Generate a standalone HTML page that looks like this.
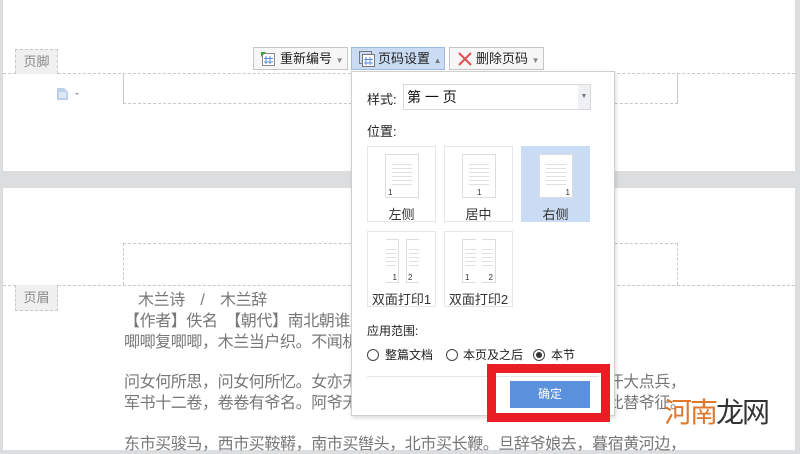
<!DOCTYPE html>
<html><head><meta charset="utf-8"><style>
*{margin:0;padding:0;box-sizing:border-box}
body{width:800px;height:450px;overflow:hidden;background:#dcdddf;font-family:"Liberation Sans","Noto Sans CJK SC",sans-serif;position:relative}
.a{position:absolute}
.pg{background:#fff}
.btn{position:absolute;height:23px;border:1px solid #c6c6c6;background:#f6f6f6;font-size:13px;line-height:21px;color:#222;padding-left:26px}
.tile{position:absolute;width:69px;height:76px;border:1px solid #e6e6e6;background:#fff;font-size:13px;color:#333;text-align:center}
.doc{position:absolute;width:34px;height:44px;border:1px solid #ddd;background:#fff;left:17px;top:7px}
.ln{position:absolute;left:6px;right:6px;height:1px;background:#e0e0e0}
.txt{position:absolute;left:124px;font-size:16px;color:#777;white-space:nowrap;letter-spacing:-0.4px}
.rd{position:absolute;width:12px;height:12px;border:1px solid #444;border-radius:50%;top:277px}
.rl{position:absolute;top:274px;font-size:12px;color:#222;white-space:nowrap}
</style></head><body>
<div class="a pg" style="left:3px;top:0;width:792px;height:171px"></div>
<div class="a pg" style="left:3px;top:188px;width:792px;height:262px"></div>
<div class="a" style="left:3px;top:73px;width:792px;border-top:1px dashed #c8c8c8"></div>
<div class="a" style="left:15px;top:49px;width:43px;height:25px;border:1px dashed #c8c8c8;border-bottom:none;background:#f0f0f0;font-size:13px;color:#888;text-align:center;line-height:24px">页脚</div>
<div class="a" style="left:123px;top:73px;width:555px;height:31px;border-left:1px solid #c8c8c8;border-right:1px solid #c8c8c8;border-bottom:1px dashed #c8c8c8"></div>
<svg class="a" style="left:56px;top:87px" width="28" height="14"><path d="M1 1h7l4 4v8H1z" fill="#bcd0ec"/><path d="M3 6h7M3 8h7M3 10h7" stroke="#fff"/><path d="M19 6l2 2 2-2z" fill="#999"/></svg>
<div class="a" style="left:123px;top:243px;width:555px;height:42px;border:1px dashed #c8c8c8;border-bottom:none"></div>
<div class="a" style="left:3px;top:285px;width:792px;border-top:1px dashed #c8c8c8"></div>
<div class="a" style="left:15px;top:285px;width:43px;height:26px;border:1px dashed #c8c8c8;border-top:none;background:#f0f0f0;font-size:13px;color:#888;text-align:center;line-height:25px">页眉</div>
<div class="txt" style="left:138px;top:286px">木兰诗　/　木兰辞</div>
<div class="txt" style="top:307px">【作者】佚名　【朝代】南北朝谁来写这个</div>
<div class="txt" style="top:328px">唧唧复唧唧，木兰当户织。不闻机杼声，惟闻女叹息。</div>
<div class="txt" style="top:368px">问女何所思，问女何所忆。女亦无所思，女亦无所忆。昨夜见军帖，可汗大点兵，</div>
<div class="txt" style="top:389px">军书十二卷，卷卷有爷名。阿爷无大儿，木兰无长兄，愿为市鞍马，从此替爷征。</div>
<div class="txt" style="top:430px">东市买骏马，西市买鞍鞯，南市买辔头，北市买长鞭。旦辞爷娘去，暮宿黄河边，</div>
<div class="btn" style="left:253px;top:47px;width:95px">重新编号 <span style="font-size:8px;color:#888">▼</span>
<svg class="a" style="left:6px;top:3px" width="16" height="16"><rect x="2.5" y="2.5" width="12" height="12" fill="#fff" stroke="#888"/><path d="M6 5v8M10 5v8M4 7.5h9M4 11h9" stroke="#5a8ad8"/><path d="M1 1h5L1 6z" fill="#3aa43a"/></svg></div>
<div class="btn" style="left:351px;top:47px;width:94px;background:#cadcf3;border-color:#9bbbe6">页码设置 <span style="font-size:8px;color:#777">▲</span>
<svg class="a" style="left:7px;top:3px" width="16" height="16"><rect x="0.5" y="0.5" width="12" height="12" fill="none" stroke="#777"/><rect x="3.5" y="3.5" width="12" height="12" fill="#fff" stroke="#777"/><path d="M7 6v8M11 6v8M5 8.5h9M5 12h9" stroke="#5a8ad8"/></svg></div>
<div class="btn" style="left:449px;top:47px;width:95px">删除页码 <span style="font-size:8px;color:#888">▼</span>
<svg class="a" style="left:8px;top:4px" width="14" height="14"><path d="M1 1l12 12M13 1L1 13" stroke="#e05050" stroke-width="2"/></svg></div>
<div class="a" style="left:351px;top:71px;width:264px;height:345px;background:#fff;border:1px solid #cfcfcf;box-shadow:1px 2px 4px rgba(0,0,0,.15)">
 <div class="a" style="left:15px;top:17px;font-size:13px;color:#222">样式:</div>
 <div class="a" style="left:51px;top:12px;width:188px;height:26px;border:1px solid #d8d8d8;font-size:14px;line-height:24px;padding-left:3px;color:#111">第 一 页
  <div class="a" style="right:0;top:0;width:12px;height:24px;background:#eef0f3;font-size:7px;color:#778;text-align:center;line-height:24px">▼</div></div>
 <div class="a" style="left:15px;top:49px;font-size:13px;color:#222">位置:</div>
 <div class="tile" style="left:15px;top:74px"><div class="doc"><div class="ln" style="top:9px"></div><div class="ln" style="top:13px"></div><div class="ln" style="top:17px"></div><div class="ln" style="top:21px"></div><div class="ln" style="top:25px"></div><div class="ln" style="top:29px"></div><span class="a" style="left:2px;bottom:0;font-size:8px">1</span></div><div class="a" style="left:0;right:0;top:57px">左侧</div></div>
 <div class="tile" style="left:92px;top:74px"><div class="doc"><div class="ln" style="top:9px"></div><div class="ln" style="top:13px"></div><div class="ln" style="top:17px"></div><div class="ln" style="top:21px"></div><div class="ln" style="top:25px"></div><div class="ln" style="top:29px"></div><span class="a" style="left:14px;bottom:0;font-size:8px">1</span></div><div class="a" style="left:0;right:0;top:57px">居中</div></div>
 <div class="tile" style="left:169px;top:74px;background:#cadcf3;border-color:#cadcf3"><div class="doc"><div class="ln" style="top:9px"></div><div class="ln" style="top:13px"></div><div class="ln" style="top:17px"></div><div class="ln" style="top:21px"></div><div class="ln" style="top:25px"></div><div class="ln" style="top:29px"></div><span class="a" style="right:2px;bottom:0;font-size:8px">1</span></div><div class="a" style="left:0;right:0;top:57px">右侧</div></div>
 <div class="tile" style="left:15px;top:159px"><div class="doc" style="left:18px;width:13px;border-left:none"><div class="ln" style="top:9px;left:0;right:2px"></div><div class="ln" style="top:13px;left:0;right:2px"></div><div class="ln" style="top:17px;left:0;right:2px"></div><div class="ln" style="top:21px;left:0;right:2px"></div><div class="ln" style="top:25px;left:0;right:2px"></div><span class="a" style="right:1px;bottom:0;font-size:8px">1</span></div><div class="doc" style="left:38px;width:13px;border-right:none"><div class="ln" style="top:9px;left:2px;right:0"></div><div class="ln" style="top:13px;left:2px;right:0"></div><div class="ln" style="top:17px;left:2px;right:0"></div><div class="ln" style="top:21px;left:2px;right:0"></div><div class="ln" style="top:25px;left:2px;right:0"></div><span class="a" style="left:1px;bottom:0;font-size:8px">2</span></div><div class="a" style="left:0;right:0;top:57px">双面打印1</div></div>
 <div class="tile" style="left:92px;top:159px"><div class="doc" style="left:17px;width:14px;border-right:none"><div class="ln" style="top:9px;left:2px;right:0"></div><div class="ln" style="top:13px;left:2px;right:0"></div><div class="ln" style="top:17px;left:2px;right:0"></div><div class="ln" style="top:21px;left:2px;right:0"></div><div class="ln" style="top:25px;left:2px;right:0"></div><span class="a" style="left:2px;bottom:0;font-size:8px">1</span></div><div class="doc" style="left:37px;width:14px;border-left:none"><div class="ln" style="top:9px;left:0;right:2px"></div><div class="ln" style="top:13px;left:0;right:2px"></div><div class="ln" style="top:17px;left:0;right:2px"></div><div class="ln" style="top:21px;left:0;right:2px"></div><div class="ln" style="top:25px;left:0;right:2px"></div><span class="a" style="right:2px;bottom:0;font-size:8px">2</span></div><div class="a" style="left:0;right:0;top:57px">双面打印2</div></div>
 <div class="a" style="left:15px;top:250px;font-size:12px;color:#222">应用范围:</div>
 <div class="rd" style="left:15px"></div><div class="rl" style="left:33px">整篇文档</div>
 <div class="rd" style="left:94px"></div><div class="rl" style="left:111px">本页及之后</div>
 <div class="rd" style="left:181px"><span style="position:absolute;left:2px;top:2px;width:6px;height:6px;border-radius:50%;background:#333"></span></div><div class="rl" style="left:199px">本节</div>
 <div class="a" style="left:15px;top:304px;width:232px;border-top:1px solid #e6e6e6"></div>
</div>
<div class="a" style="left:487px;top:364px;width:123px;height:58px;border:9px solid #ea1c24"></div>
<div class="a" style="left:510px;top:381px;width:80px;height:27px;background:#5a90dc;color:#fff;font-size:12px;text-align:center;line-height:27px">确定</div>
<div class="a" style="left:664px;top:391px;font-size:28px;white-space:nowrap;letter-spacing:-2px"><span style="color:#e0782c">河南</span><span style="color:#333">龙网</span></div>
</body></html>
